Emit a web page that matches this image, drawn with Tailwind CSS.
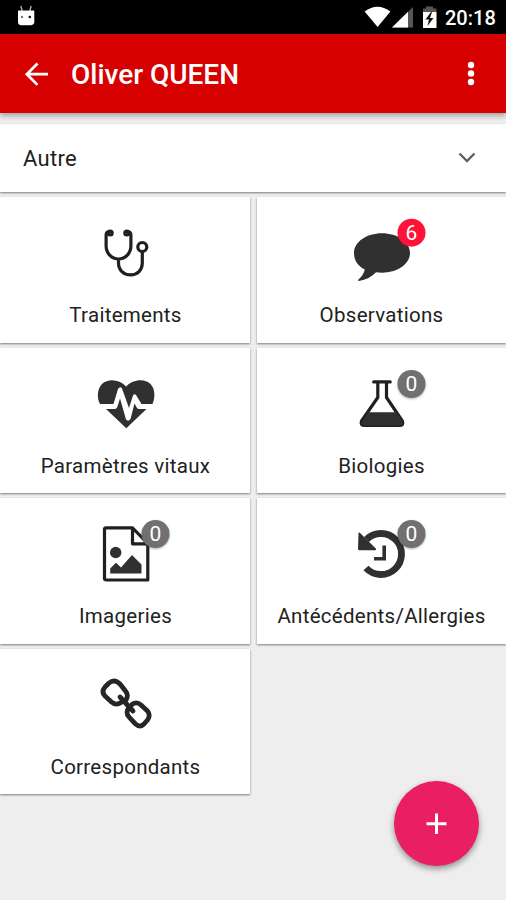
<!DOCTYPE html>
<html lang="fr">
<head>
<meta charset="utf-8">
<title>Oliver QUEEN</title>
<script src="https://cdn.jsdelivr.net/npm/@tailwindcss/browser@4"></script>
</head>
<body class="w-[506px] h-[900px] overflow-hidden bg-[#eeeeee] font-[Roboto,sans-serif] text-[#212121]">
<div class="h-[34px] bg-black flex items-center justify-between">
  <svg class="ml-4 w-5 h-[34px]" viewBox="16 0 20 34"><path d="M20.800 6l1.500 5M31.200 6l-1.500 5" stroke="#bbb" stroke-width="1.300"/><path d="M18.500 10.500h15q.8 0 .8 1V22q0 3-4 3.200h-8.500q-3.800 0-3.800-3.200V11.500q0-1 .5-1z" fill="#fff"/><circle cx="22" cy="17" r="1.100" fill="#555"/><circle cx="29.800" cy="17" r="1.300" fill="#111"/></svg>
  <div class="flex items-center pr-[11px]">
    <svg class="w-[80px] h-[34px]" viewBox="362 0 80 34"><path d="M364.600 11.500Q377.500 2 390.400 11.500L377.600 27z" fill="#fff"/><path d="M392 27.500L413 7V27.500z" fill="#555"/><path d="M392 27.500L408 11.800V27.500z" fill="#fff"/><path d="M423 8.500h3V6.500h7v2h3.500V12H423z" fill="#555"/><path d="M423 12h13.500v16H423z" fill="#fff"/><path d="M431 12l-5.500 7.500h3.500l-1.500 6.500 6-8h-3.500l2-6z" fill="#111"/></svg>
    <span class="ml-[3px] mt-[2px] text-[20px] font-medium text-white leading-none w-[50px] whitespace-nowrap">20:18</span>
  </div>
</div>
<header class="relative h-[79px] bg-[#d70000] flex items-center shadow-[0_3px_5px_rgba(0,20,10,0.32)]">
  <svg class="ml-[24px] w-[26px] h-[26px]" viewBox="24 60.500 26 26" fill="none" stroke="#fff" stroke-width="2.700"><path d="M48 73.700H27M37.500 63L26.800 73.700 37.500 84.400"/></svg>
  <h1 class="ml-[21px] mt-[3px] text-[28px] font-medium text-white leading-none tracking-[-0.02px]">Oliver QUEEN</h1>
  <svg class="ml-auto mr-[28px] w-[14px] h-[28px]" viewBox="464 60 14 28" fill="#fff"><circle cx="471" cy="65" r="3.200"/><circle cx="471" cy="73.500" r="3.200"/><circle cx="471" cy="82" r="3.200"/></svg>
</header>
<main class="pt-[11px]">
  <div class="h-[68px] bg-white flex items-center justify-between pl-[23px] pr-[29px] shadow-[0_1px_2px_rgba(0,0,0,0.48)]">
    <span class="text-[22px] tracking-[0.3px]">Autre</span>
    <svg class="w-5 h-5" viewBox="457 148 20 20" fill="none" stroke="#606060" stroke-width="2.400"><path d="M459.500 153.500l7.500 7.500 7.500-7.500"/></svg>
  </div>
  <div class="mt-[5px] grid grid-cols-[250px_249px] gap-x-[7px] gap-y-[5px] auto-rows-[145.500px] text-[20.500px] leading-[24px] text-center [&>section]:bg-white [&>section]:shadow-[0_1px_2px_rgba(0,0,0,0.48)] [&>section]:pt-[13px] [&>section]:flex [&>section]:flex-col [&>section]:items-center [&>section:nth-child(odd)]:pl-px [&_svg]:w-[140px] [&_svg]:h-[80px] [&_p]:mt-[13px] [&_p]:tracking-[0.280px] [&_p]:whitespace-nowrap">
    <section>
      <svg viewBox="-4.500 0 140 80" fill="none" stroke="#202020" stroke-width="3.200" stroke-linecap="round"><path d="M49 22Q45.600 21.500 45.600 25V36C45.600 43 51 49 58 49S70.400 43 70.400 36V25Q70.400 21.500 67 22M58 49.500V53C58 60 63 64.800 70 64.800S81.800 60 81.800 53V42"/><circle cx="49.700" cy="23" r="2"/><circle cx="66.300" cy="23" r="2"/><circle cx="81.800" cy="37" r="4.500"/></svg>
      <p>Traitements</p>
    </section>
    <section>
      <svg viewBox="1.500 0 140 80"><path d="M71.500 23.300C87 23.300 99.500 32 99.500 43S87 62.700 71.500 62.700Q68 62.700 65.500 62.300Q59 69.500 48.500 71Q46.800 70.500 48.500 69Q53 65 54.300 59.500C47 56 43.500 50 43.500 43C43.500 32 56 23.300 71.500 23.300z" fill="#303030"/><circle cx="101" cy="22.700" r="14" fill="#ff1236"/><text x="101" y="29.500" text-anchor="middle" font-size="21" fill="#fff">6</text></svg>
      <p>Observations</p>
    </section>
    <section>
      <svg viewBox="-4.500 0.500 140 80"><path d="M39.500 43.500C36 37 37 28 41.500 23.500C48 17.500 59 19 65.700 26C72 19 84 17.500 90 23.500C94.500 28 95 37 92 43.500H81L75.500 34.500Q73.800 33 72.500 35L68.500 47.500 61.500 28Q59.500 25.500 57.500 28.500L53 43.500z" fill="#303030"/><path d="M45.500 48.500H54.500Q56.500 48.200 57 46L59.500 38 65.500 59Q67.800 61.500 70 58.500L74 43 76.500 47.500Q77.200 48.500 78.500 48.500H86L65.800 67.800z" fill="#303030"/></svg>
      <p>Paramètres vitaux</p>
    </section>
    <section>
      <svg viewBox="1.500 0.500 140 80"><path d="M63.200 21.400H79.700M67.300 22V37L51 60.500Q49.500 65 54 65H89Q93.500 65 91.900 60.500L76 37V22" fill="none" stroke="#202020" stroke-width="3.200" stroke-linecap="round"/><path d="M57.500 51.700H86L92 61.500Q92.500 65 89 65H54Q50 65 51.500 61.500z" fill="#303030"/><circle cx="101" cy="23.500" r="14" fill="#707070" class="drop-shadow-[0_1px_1px_rgba(0,0,0,0.3)]"/><text x="101" y="30.500" text-anchor="middle" font-size="21" fill="#fff">0</text></svg>
      <p>Biologies</p>
    </section>
    <section>
      <svg viewBox="-4.500 0.500 140 80"><path d="M45.500 17.300H72L87.300 33V69.500H46Q44 69.500 44 67.800V19Q44 17.300 45.500 17.300zM72 18V33.300H87" fill="none" stroke="#202020" stroke-width="3.200" stroke-linejoin="round"/><circle cx="55.200" cy="32" r="5.700" transform="translate(0 10)" fill="#303030"/><path d="M49.700 63V58L55.500 52.300 60.500 57 71.500 44.500 81 54V63z" fill="#303030"/><circle cx="95" cy="23.500" r="14" fill="#707070" class="drop-shadow-[0_1px_1px_rgba(0,0,0,0.3)]"/><text x="95" y="30.500" text-anchor="middle" font-size="21" fill="#fff">0</text></svg>
      <p>Imageries</p>
    </section>
    <section>
      <svg viewBox="1.500 0.500 140 80"><path d="M56 29A20.500 20.500 0 1 1 55.500 57.500" fill="none" stroke="#303030" stroke-width="6.800"/><path d="M48 22.500Q48 21.500 49.300 22.300L65.500 38.200Q66 39.800 64.500 39.800H49Q47.500 39.800 47.500 38.500z" fill="#303030"/><path d="M73.700 35V48.200H63.500" fill="none" stroke="#303030" stroke-width="3.600"/><circle cx="101" cy="23.500" r="14" fill="#707070" class="drop-shadow-[0_1px_1px_rgba(0,0,0,0.3)]"/><text x="101" y="30.500" text-anchor="middle" font-size="21" fill="#fff">0</text></svg>
      <p>Antécédents/Allergies</p>
    </section>
    <section>
      <svg viewBox="-4.500 0.500 140 80" fill="none" stroke="#262626" stroke-width="4.800" stroke-linecap="round" stroke-linejoin="round"><path d="M65.500 38.500Q68.500 33.500 65 29.500L59.500 22.500Q54 17 48.500 21.500L44.500 25.500Q40.500 30 44.500 34.500L51 40.500Q55.500 44.500 60.500 41"/><path d="M68.500 46Q64.500 51 68.500 55.500L75 62.500Q79.500 66.500 83.500 62.500L87 58.500Q90.500 54 87 49.500L80.500 43.500Q76 39.500 71.500 43"/><path d="M59.500 35.500L72.500 49.500"/></svg>
      <p>Correspondants</p>
    </section>
  </div>
</main>
<button aria-label="Ajouter" class="absolute left-[394px] top-[781px] w-[85px] h-[85px] rounded-full bg-[#e91e63] shadow-[0_3px_6px_rgba(0,0,0,0.4)] flex items-center justify-center">
  <svg class="w-6 h-6" viewBox="0 0 24 24" stroke="#fff" stroke-width="3"><path d="M1.500 11.700h20M11.500 1.500v20.500"/></svg>
</button>
</body>
</html>
